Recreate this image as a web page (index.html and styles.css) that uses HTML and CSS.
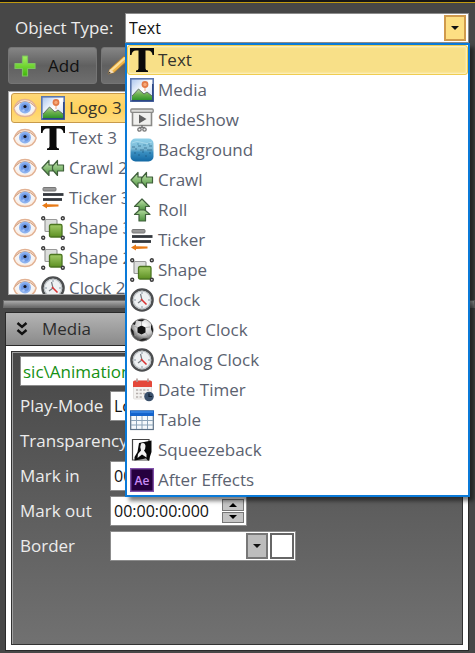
FILE: index.html
```html
<!DOCTYPE html>
<html lang="en">
<head>
  <meta charset="UTF-8" />
  <meta name="viewport" content="width=device-width, initial-scale=1" />
  <title>Object Type</title>
  <link rel="stylesheet" href="styles.css">
</head>
<body>

  <!-- Icon set -->
  <svg class="sprite" aria-hidden="true">
    <defs>
      <linearGradient id="g-green" x1="0" y1="0" x2="0" y2="1"><stop offset="0" stop-color="#c5e8b0"/><stop offset="1" stop-color="#4f9440"/></linearGradient>
      <linearGradient id="g-plus" x1="0" y1="0" x2="0" y2="1"><stop offset="0" stop-color="#a4f060"/><stop offset="1" stop-color="#3fb808"/></linearGradient>
      <linearGradient id="g-sky" x1="0" y1="0" x2="1" y2="1"><stop offset="0" stop-color="#a9c4ee"/><stop offset="0.5" stop-color="#fff"/><stop offset="1" stop-color="#c4d6f4"/></linearGradient>
      <linearGradient id="g-hill" x1="0" y1="0" x2="0" y2="1"><stop offset="0" stop-color="#b4cfa0"/><stop offset="0.5" stop-color="#6bb04e"/><stop offset="1" stop-color="#2f9428"/></linearGradient>
      <linearGradient id="g-water" x1="0" y1="0" x2="0" y2="1"><stop offset="0" stop-color="#8ed0ea"/><stop offset="0.45" stop-color="#7bb8d4"/><stop offset="0.6" stop-color="#3a8fc0"/><stop offset="1" stop-color="#1268a4"/></linearGradient>
      <linearGradient id="g-box" x1="0" y1="0" x2="0" y2="1"><stop offset="0" stop-color="#a3cc68"/><stop offset="1" stop-color="#5c8f22"/></linearGradient>
      <radialGradient id="g-ball" cx="0.6" cy="0.3" r="0.7"><stop offset="0" stop-color="#fff"/><stop offset="0.6" stop-color="#c8c8c8"/><stop offset="1" stop-color="#444"/></radialGradient>
    </defs>

    <symbol id="i-eye" viewBox="0 0 24 24">
      <path d="M0.800 12.500Q4 3.500 12 3.500T23.200 12Q21 20.500 12 20.500T0.800 12.500Z" fill="#fbeee4" stroke="#e2b294" stroke-width="1.400"/>
      <path d="M2.500 12Q6 6.500 12 6.500T21.500 12Q19 18 12 18T2.500 12Z" fill="#f4f4f6"/>
      <path d="M2 10.500Q6 5.500 12 5.500T22 10.500" fill="none" stroke="#cfa084" stroke-width="1"/>
      <circle cx="12" cy="11.500" r="6" fill="#8db2ef"/>
      <circle cx="12" cy="11.500" r="4" fill="#6f98e4"/>
      <circle cx="12" cy="10.500" r="1.600" fill="#15151f"/>
      <circle cx="10.500" cy="14.500" r="1.200" fill="#a9c6f6"/>
    </symbol>

    <symbol id="i-text" viewBox="0 0 24 24">
      <path d="M0 0H24V7H22.500Q22 2.500 18 2.500H15.500V20.500Q15.500 22.500 18 22.500V24H6V22.500Q8.500 22.500 8.500 20.500V2.500H6Q2 2.500 1.500 7H0Z" fill="#0a0a0a"/>
    </symbol>

    <symbol id="i-media" viewBox="0 0 24 24">
      <rect x="0.800" y="0.800" width="22.400" height="22.400" fill="url(#g-sky)" stroke="#5a76ae" stroke-width="1.600"/>
      <path d="M2 18L8.500 11L14 16L17 14L22 18V22H2Z" fill="url(#g-hill)"/>
      <path d="M2 18L8.500 11L14 16L17 14L22 18" fill="none" stroke="#5f6f64" stroke-width="1"/>
      <circle cx="15" cy="6.500" r="3.400" fill="#e27a48"/>
      <circle cx="15" cy="6.500" r="1.700" fill="#f6a878"/>
      <path d="M15 10V13" stroke="#f0b896" stroke-width="1.200"/>
      <path d="M1.500 22.800H22.800V6" fill="none" stroke="#2c4684" stroke-width="1.500"/>
    </symbol>

    <symbol id="i-slideshow" viewBox="0 0 24 24">
      <path d="M2.500 4H21.500V17.500H2.500Z" fill="#f0f0ee" stroke="#8a8a88" stroke-width="1.600"/>
      <rect x="0.800" y="1" width="22.400" height="3.400" rx="1" fill="#dcdcda" stroke="#8a8a88" stroke-width="1.300"/>
      <path d="M9 6.500L16.500 11L9 15.500Z" fill="#606060"/>
      <path d="M12 17V20" stroke="#777" stroke-width="1.600"/>
      <circle cx="9.500" cy="21.500" r="1.700" fill="#eee" stroke="#777" stroke-width="1.300"/>
      <circle cx="14.500" cy="21.500" r="1.700" fill="#eee" stroke="#777" stroke-width="1.300"/>
      <path d="M9 19.500H15" stroke="#777" stroke-width="1.200"/>
    </symbol>

    <symbol id="i-background" viewBox="0 0 24 24">
      <rect x="0.500" y="0.500" width="23" height="23" rx="5" fill="url(#g-water)"/>
      <path d="M2 5Q7 2 12 4.500T22 4" fill="none" stroke="#b3e0f0" stroke-width="1" opacity="0.700"/>
      <path d="M2 9H5M8 8H11M14 10H17M19 8H22M5 11H7M10 12H14M17 12H22" stroke="#376f8d" stroke-width="1.200" opacity="0.800"/>
      <path d="M4 15H6M12 14H14M19 15H21M8 17H10M15 18H17" stroke="#1c5680" stroke-width="1.200" opacity="0.700"/>
      <path d="M7 6H9M13 7H16M18 6H20" stroke="#559abb" stroke-width="1.200"/>
    </symbol>

    <symbol id="i-crawl" viewBox="0 0 24 24">
      <path d="M10 12L16.500 4.500V9H22.500V15H16.500V19.500Z" fill="url(#g-green)" stroke="#40603c" stroke-width="1.200" stroke-linejoin="round"/>
      <path d="M1 12L8 4.500V9H11.500V15H8V19.500Z" fill="url(#g-green)" stroke="#40603c" stroke-width="1.200" stroke-linejoin="round"/>
    </symbol>

    <symbol id="i-roll" viewBox="0 0 24 24">
      <path d="M12 9.500L20 16.500H15.500V23H9V16.500H4.500Z" fill="url(#g-green)" stroke="#40603c" stroke-width="1.200" stroke-linejoin="round"/>
      <path d="M12 1L19.500 8.500H15.500V12H9V8.500H4.500Z" fill="url(#g-green)" stroke="#40603c" stroke-width="1.200" stroke-linejoin="round"/>
    </symbol>

    <symbol id="i-ticker" viewBox="0 0 24 24">
      <rect x="2" y="1.500" width="13" height="3.500" rx="1" fill="#999" stroke="#777" stroke-width="1"/>
      <path d="M2 8.500H22.500" stroke="#34383e" stroke-width="2.800"/>
      <path d="M2 13.500H21" stroke="#34383e" stroke-width="2.800"/>
      <path d="M1 19.500L6 16.500V18.300L17.500 18.500V20.500L6 21V22.500Z" fill="#e87a16"/>
    </symbol>

    <symbol id="i-shape" viewBox="0 0 24 24">
      <rect x="4" y="3.500" width="12" height="12" rx="1" fill="#dcdedc" stroke="#999" stroke-width="1.200"/>
      <rect x="8.500" y="8.500" width="12.500" height="12.500" rx="1.500" fill="url(#g-box)" stroke="#4b7520" stroke-width="1.300"/>
      <g fill="#eee" stroke="#3b3b3b" stroke-width="1.400">
        <circle cx="2.200" cy="2.200" r="1.500"/><circle cx="21.800" cy="2.200" r="1.500"/>
        <circle cx="2.200" cy="21.800" r="1.500"/><circle cx="21.800" cy="21.800" r="1.500"/>
      </g>
    </symbol>

    <symbol id="i-clock" viewBox="0 0 24 24">
      <circle cx="12" cy="12" r="10.500" fill="#eef1f3" stroke="#4c4e50" stroke-width="2.600"/>
      <circle cx="12" cy="12" r="8.800" fill="none" stroke="#bcc1c4" stroke-width="1.200"/>
      <path d="M12 4V6M20 12H18M12 20V18M4 12H6" stroke="#8b98a4" stroke-width="1"/>
      <path d="M12 12L10.500 6M12 12L8 15" stroke="#777c82" stroke-width="1.200"/>
      <path d="M11 11L16.500 16.500" stroke="#d93434" stroke-width="1.600"/>
    </symbol>

    <symbol id="i-ball" viewBox="0 0 24 24">
      <circle cx="12" cy="12" r="11.200" fill="url(#g-ball)" stroke="#777" stroke-width="0.800"/>
      <path d="M11.500 7.500L15.500 9.500V14.500L11.500 16.500L7.500 14.500V9.500Z" fill="#111"/>
      <path d="M7 2.500Q11 0.500 15 1.500L12 3.500ZM21 6Q24 11 22.500 15L21 11ZM18 20.500Q14 23.500 9 22.500L13 20.500ZM1 10L3.500 13L4 18Q0.500 14 1 10ZM2.500 6L6 3L5 7Z" fill="#1c1c1c"/>
      <path d="M11.500 7.500V4M15.500 9.500L20 9M15.500 14.500L18 18M7.500 14.500L5 18M7.500 9.500L4 8" stroke="#9a9a9a" stroke-width="0.700"/>
    </symbol>

    <symbol id="i-date" viewBox="0 0 24 24">
      <rect x="3.500" y="3" width="18" height="18" rx="1" fill="#f3f2f0" stroke="#dddbd8" stroke-width="0.800"/>
      <path d="M3 9V4Q3 2.500 5 2.500H20Q22 2.500 22 4V9Z" fill="#e4483a"/>
      <path d="M7 0.500V4M18 0.500V4" stroke="#b09a96" stroke-width="1.600"/>
      <path d="M6 12H19M6 15.500H15M6 19H13" stroke="#b6b0ad" stroke-width="1.700" stroke-dasharray="2.200 1.400"/>
      <circle cx="19" cy="18.500" r="4.800" fill="#3a506b"/>
      <path d="M19 15.500V18.500H22" fill="none" stroke="#10202f" stroke-width="1.200"/>
    </symbol>

    <symbol id="i-table" viewBox="0 0 24 24">
      <rect x="0.700" y="3" width="22.600" height="18.500" fill="#f5f9fc" stroke="#5d7288" stroke-width="1.200"/>
      <path d="M6.500 8V21M12 8V21M17.500 8V21M1 12.500H23M1 17H23" stroke="#8ba3b8" stroke-width="1"/>
      <rect x="0" y="2.500" width="24" height="5.500" fill="#1464cc"/>
      <path d="M1 4H23" stroke="#4695ee" stroke-width="1.200"/>
    </symbol>

    <symbol id="i-squeeze" viewBox="0 0 24 24">
      <path d="M2.500 1.500H19V22H2.500Z" fill="#fff" stroke="#444" stroke-width="1.200"/>
      <path d="M9 5L21.500 2.500V14L18.500 23L16 20.500L4.500 22.500V19L7.500 14Z" fill="#080808"/>
      <path d="M11 5.500Q15 4 15.500 8Q15.500 11 14 12.500L16.500 16L16.500 19.500L12 16.500L7.500 20L8 16L11 12.500Q9.500 9 11 5.500Z" fill="#f2f2f2"/>
    </symbol>

    <symbol id="i-ae" viewBox="0 0 24 24">
      <rect x="0.700" y="0.700" width="22.600" height="22.600" fill="#26003f" stroke="#8150aa" stroke-width="1.400"/>
      <text x="12" y="16.500" text-anchor="middle" class="ae-text">Ae</text>
    </symbol>

    <symbol id="i-plus" viewBox="0 0 24 24">
      <path d="M9.500 2H14.500V9.500H22V14.500H14.500V22H9.500V14.500H2V9.500H9.500Z" fill="url(#g-plus)" stroke="#7cc45e" stroke-width="1.200" stroke-linejoin="round"/>
    </symbol>

    <symbol id="i-pencil" viewBox="0 0 24 24">
      <path d="M2 20L4 15L18 2L22 6L8 18.500Z" fill="#f0b548" stroke="#a9782d" stroke-width="0.800"/>
      <path d="M4.500 15.500L18.500 3L20 4.500L6 17Z" fill="#fbe09a"/>
      <path d="M2 20L4 15L8 18.500Z" fill="#f3dfc0"/>
      <path d="M2 20L3 17.500L4.800 19Z" fill="#333"/>
    </symbol>
  </svg>

  <div class="object-row">
    <label for="object-type">Object Type:</label>
    <div class="combo">
      <select id="object-type" class="field arrow-gold">
        <option>Text</option>
      </select>
      <ul class="popup" role="listbox" aria-label="Object types">
        <li class="item active" role="option" aria-selected="true"><svg class="icon"><use href="#i-text"/></svg>Text</li>
        <li class="item" role="option"><svg class="icon"><use href="#i-media"/></svg>Media</li>
        <li class="item" role="option"><svg class="icon"><use href="#i-slideshow"/></svg>SlideShow</li>
        <li class="item" role="option"><svg class="icon"><use href="#i-background"/></svg>Background</li>
        <li class="item" role="option"><svg class="icon"><use href="#i-crawl"/></svg>Crawl</li>
        <li class="item" role="option"><svg class="icon"><use href="#i-roll"/></svg>Roll</li>
        <li class="item" role="option"><svg class="icon"><use href="#i-ticker"/></svg>Ticker</li>
        <li class="item" role="option"><svg class="icon"><use href="#i-shape"/></svg>Shape</li>
        <li class="item" role="option"><svg class="icon"><use href="#i-clock"/></svg>Clock</li>
        <li class="item" role="option"><svg class="icon"><use href="#i-ball"/></svg>Sport Clock</li>
        <li class="item" role="option"><svg class="icon"><use href="#i-clock"/></svg>Analog Clock</li>
        <li class="item" role="option"><svg class="icon"><use href="#i-date"/></svg>Date Timer</li>
        <li class="item" role="option"><svg class="icon"><use href="#i-table"/></svg>Table</li>
        <li class="item" role="option"><svg class="icon"><use href="#i-squeeze"/></svg>Squeezeback</li>
        <li class="item" role="option"><svg class="icon"><use href="#i-ae"/></svg>After Effects</li>
      </ul>
    </div>
  </div>

  <div class="toolbar">
    <button type="button" class="tool"><svg class="icon"><use href="#i-plus"/></svg>Add</button>
    <button type="button" class="tool" aria-label="Edit"><svg class="icon"><use href="#i-pencil"/></svg></button>
  </div>

  <ul class="objects">
    <li class="object selected"><svg class="icon"><use href="#i-eye"/></svg><svg class="icon"><use href="#i-media"/></svg>Logo 3</li>
    <li class="object"><svg class="icon"><use href="#i-eye"/></svg><svg class="icon"><use href="#i-text"/></svg>Text 3</li>
    <li class="object"><svg class="icon"><use href="#i-eye"/></svg><svg class="icon"><use href="#i-crawl"/></svg>Crawl 2</li>
    <li class="object"><svg class="icon"><use href="#i-eye"/></svg><svg class="icon"><use href="#i-ticker"/></svg>Ticker 3</li>
    <li class="object"><svg class="icon"><use href="#i-eye"/></svg><svg class="icon"><use href="#i-shape"/></svg>Shape 3</li>
    <li class="object"><svg class="icon"><use href="#i-eye"/></svg><svg class="icon"><use href="#i-shape"/></svg>Shape 2</li>
    <li class="object"><svg class="icon"><use href="#i-eye"/></svg><svg class="icon"><use href="#i-clock"/></svg>Clock 2</li>
  </ul>

  <div class="splitter"></div>

  <section class="panel">
    <button type="button" class="panel-head" aria-expanded="true">
      <svg class="chevrons" viewBox="0 0 12 14"><path d="M1.500 1L6 5L10.500 1M1.500 8L6 12L10.500 8" fill="none" stroke="#111" stroke-width="2.400"/></svg>
      Media
    </button>
    <div class="panel-body">
      <form class="form">
        <input type="text" class="field path" aria-label="File" value="sic\Animation">

        <div class="row">
          <label for="play-mode">Play-Mode</label>
          <select id="play-mode" class="field arrow-gray time"><option>Loop</option></select>
        </div>
        <div class="row">
          <label for="transparency">Transparency</label>
          <input type="range" id="transparency" class="slider">
        </div>
        <div class="row">
          <label for="mark-in">Mark in</label>
          <div class="field time">
            <input type="text" id="mark-in" value="00:00:00:000">
          </div>
        </div>
        <div class="row">
          <label for="mark-out">Mark out</label>
          <div class="field time">
            <input type="text" id="mark-out" value="00:00:00:000">
            <div class="spin">
              <button type="button" aria-label="Increase"><svg viewBox="0 0 8 4"><path d="M0 4L4 0L8 4Z"/></svg></button>
              <button type="button" aria-label="Decrease"><svg viewBox="0 0 8 4"><path d="M0 0L4 4L8 0Z"/></svg></button>
            </div>
          </div>
        </div>
        <div class="row">
          <label for="border">Border</label>
          <div class="field border-field">
            <select id="border" class="arrow-gray"><option></option></select>
            <button type="button" class="swatch" aria-label="Border color"></button>
          </div>
        </div>
      </form>
    </div>
  </section>

</body>
</html>
```
FILE: styles.css
```css
:root {
  --background: #474747;
  --blue: #0a7ad8;
  --text: #5b6270;
  --light: #ececec;
  --field-border: #8c8c8c;
}
* {
  box-sizing: border-box;
}
body {
  margin: 0;
  min-height: 100vh;
  display: flex;
  flex-direction: column;
  background: var(--background);
  border-top: 2px solid #161616;
  font-family: "Open Sans", "Noto Sans", sans-serif;
  font-size: 17px;
  line-height: 24px;
  color: var(--light);
}
ul {
  list-style: none;
  margin: 0;
  padding: 0;
}
button,
input,
select {
  font: inherit;
  margin: 0;
}
.sprite {
  position: absolute;
  width: 0;
  height: 0;
}
.icon {
  width: 24px;
  height: 24px;
  flex: none;
}
.ae-text {
  font-size: 12px;
  font-weight: 600;
  fill: #c98bf5;
}
.field {
  height: 30px;
  border: 1px solid var(--field-border);
  border-radius: 0;
  background-color: #fff;
  color: #111;
  font-size: 16px;
}

/* Object type */
.object-row {
  display: flex;
  align-items: center;
  border-top: 1px solid #c09a10;
  padding: 10px 6px 0 15px;
}
.object-row label {
  width: 110px;
}
.combo {
  position: relative;
  flex: 1;
}
.combo select {
  display: block;
  width: 100%;
  padding: 0 3px;
}
select {
  appearance: none;
  background-repeat: no-repeat;
  background-position: right 2px center;
}
.arrow-gold {
  background-image: url("data:image/svg+xml,%3Csvg xmlns='http://www.w3.org/2000/svg' width='22' height='26'%3E%3Crect x='1' y='1' width='20' height='24' fill='%23fddf83' stroke='%23d09a4c' stroke-width='2'/%3E%3Cpath d='M7 11h8l-4 4z' fill='%23111'/%3E%3C/svg%3E");
}
.arrow-gray {
  background-image: url("data:image/svg+xml,%3Csvg xmlns='http://www.w3.org/2000/svg' width='22' height='26'%3E%3Crect x='1' y='1' width='20' height='24' fill='%23bdbdbd' stroke='%23777' stroke-width='2'/%3E%3Cpath d='M7 11h8l-4 4z' fill='%23111'/%3E%3C/svg%3E");
}
.popup {
  position: absolute;
  top: 100%;
  left: 0;
  right: -1px;
  z-index: 10;
  background: #fff;
  border: 2px solid var(--blue);
  color: var(--text);
  box-shadow: 4px 4px 4px rgba(0, 0, 0, 0.5);
}
.item {
  display: flex;
  align-items: center;
  gap: 4px;
  height: 30px;
  padding: 0 2px;
  border: 1px solid transparent;
}
.item.active {
  background: #f8e088;
  border-color: #f0cd50;
  border-radius: 3px;
  box-shadow: inset 0 0 2px 1px #fdf3c8;
  color: #35342c;
}

/* Toolbar */
.toolbar {
  display: flex;
  gap: 4px;
  padding: 4px 8px 7px;
}
.tool {
  display: flex;
  align-items: center;
  gap: 11px;
  width: 89px;
  height: 37px;
  padding: 0 4px;
  border: 1px solid #757575;
  border-radius: 3px;
  background: linear-gradient(#858585, #606060 50%, #6e6e6e);
  color: #111;
}

/* Object list */
.objects {
  height: 204px;
  margin: 0 8px;
  padding: 1px 2px;
  overflow: hidden;
  border: 1px solid #a8a8a8;
  background: #fff;
  color: var(--text);
}
.object {
  display: flex;
  align-items: center;
  gap: 4px;
  height: 30px;
  padding: 0 1px;
  border: 1px solid transparent;
}
.object.selected {
  background: linear-gradient(#ffd878, #ffd25e 50%, #ffdc80);
  border-color: #c89a4a;
  border-radius: 3px;
  color: #35342c;
}

.splitter {
  height: 8px;
  margin: 5px 0 4px 3px;
  border: 1px solid #6a6a6a;
  background: linear-gradient(#aaa, #6c6c6c);
}

/* Media panel */
.panel {
  flex: 1;
  display: flex;
  flex-direction: column;
  margin: 0 6px 2px 5px;
  border: 1px solid #2a2a2a;
}
.panel-head {
  display: flex;
  align-items: center;
  gap: 14px;
  height: 32px;
  padding: 0 10px;
  border: 0;
  background: linear-gradient(#b4b4b4, #8a8a8a);
  color: #2c2c2c;
}
.chevrons {
  width: 12px;
  height: 14px;
}
.panel-body {
  flex: 1;
  display: flex;
  padding: 5px;
  border-top: 1px solid #2a2a2a;
  background: #fff;
}
.form {
  flex: 1;
  display: flex;
  flex-direction: column;
  gap: 5px;
  padding: 4px 8px;
  border: 1px solid #333;
  background: linear-gradient(#474747, #717171);
  box-shadow: inset 1px 1px 0 #a0a0a0;
}
.path {
  padding: 0 2px;
  color: #149014;
  font-size: 17px;
}
.row {
  display: flex;
  align-items: center;
  height: 30px;
}
.row label {
  width: 90px;
  flex: none;
  white-space: nowrap;
}
.time {
  width: 137px;
  padding: 0 3px;
}
div.time {
  display: flex;
  padding: 2px;
}
.time input {
  flex: 1;
  min-width: 0;
  padding: 0 1px;
  border: 0;
  background: none;
  color: #111;
}
.spin {
  display: flex;
  flex-direction: column;
  gap: 1px;
  width: 22px;
}
.spin button {
  flex: 1;
  display: flex;
  align-items: center;
  justify-content: center;
  padding: 0;
  border: 1px solid #777;
  background: #c4c4c4;
}
.spin svg {
  width: 8px;
  height: 4px;
}
.slider {
  width: 120px;
  margin-left: 17px;
}
.border-field {
  display: flex;
  width: 186px;
  padding: 1px;
  gap: 2px;
}
.border-field select {
  flex: 1;
  border: 0;
  background-color: #fff;
  background-position: right center;
}
.swatch {
  width: 24px;
  padding: 0;
  border: 2px solid #666;
  background: #fff;
}
```
